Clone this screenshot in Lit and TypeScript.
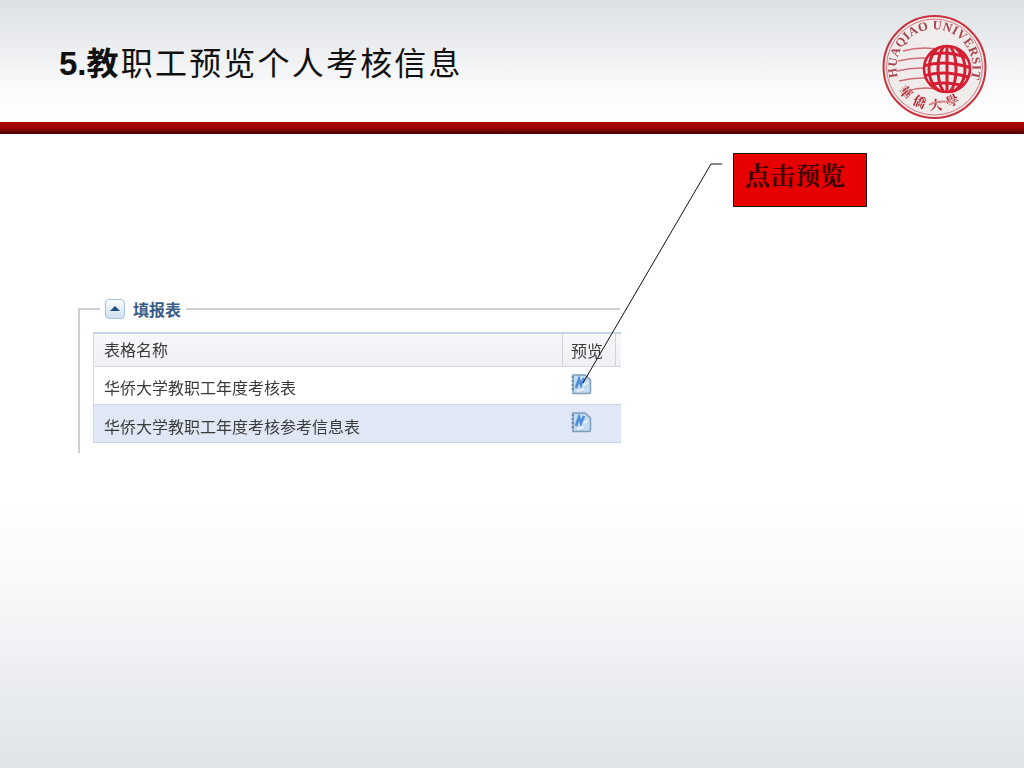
import { LitElement, html, css, svg } from "lit";
import { customElement } from "lit/decorators.js";

const docIcon = svg`
  <path d="M3 2 H15 L20.5 7 V19 Q20.5 20.5 19 20.5 H3 Z" fill="#c3daf3" stroke="#7f9cb8" stroke-width="1.5"/>
  <path d="M1.5 4 H4 M1.5 8 H4 M1.5 12 H4 M1.5 16 H4" stroke="#5f86ad" stroke-width="1.3"/>
  <path d="M6 15 L9 6 L11 12 L14 5" fill="none" stroke="#4f8fd8" stroke-width="2.6"/>
  <path d="M13 12 L18 10 M7 18 L14 16" fill="none" stroke="#f2f7fd" stroke-width="1.6"/>
`;

@customElement("app-root")
export class AppRoot extends LitElement {
  static styles = css`
    :host { display: block; width: 1024px; height: 768px; overflow: hidden; }
    .slide { position: relative; width: 1024px; height: 768px; display: flex; flex-direction: column;
      background: linear-gradient(180deg, #fff 0, #fff 500px, #f3f5f7 620px, #e0e4e8 768px); }
    .head { height: 122px; box-sizing: border-box; padding: 38px 0 0 59px;
      background: linear-gradient(180deg, #dde1e4 0, #eef0f2 55px, #fbfbfc 90px, #fff 122px); }
    .title { margin: 0; font: 400 32px/46px "Noto Sans CJK SC", "Liberation Sans", sans-serif; letter-spacing: 2.2px; color: #111; white-space: nowrap; }
    .title b { font-weight: 700; letter-spacing: 2.2px; }
    .title .num { font-family: "Liberation Sans", sans-serif; letter-spacing: 0; font-size: 33px; }
    .bar { height: 12px; background: linear-gradient(180deg, #ab0000 0, #a00000 45%, #4a0505 100%); }
    .logo { position: absolute; left: 879px; top: 15px; width: 110px; height: 108px; filter: blur(0.4px); }
    .logo text { font-family: "Liberation Serif", serif; }
    .wire { position: absolute; left: 0; top: 0; width: 1024px; height: 768px; pointer-events: none; }
    .callout { position: absolute; left: 733px; top: 153px; width: 134px; height: 54px; box-sizing: border-box;
      background: #e60000; border: 1px solid #1c0a0a; padding: 4px 0 0 11px;
      font: 700 25px/33px "Noto Serif CJK SC", "Noto Sans CJK SC", serif; color: #3a0000; white-space: nowrap; }
    .panel { position: absolute; left: 78px; top: 296px; width: 542px; height: 157px; font-family: "Noto Sans CJK SC", "Liberation Sans", sans-serif; filter: blur(0.35px); }
    .fieldset { position: absolute; left: 0; right: 0; top: 12px; bottom: 0;
      border-left: 2px solid #cfcfcf; border-top: 2px solid #cfcfcf; }
    .legend { position: absolute; left: 22px; top: 0; display: flex; align-items: center; gap: 8px;
      padding: 0 5px 0 5px; background: #fff; height: 25px; }
    .toggle { width: 20px; height: 20px; box-sizing: border-box; border: 1px solid #a9c2dc; border-radius: 4px;
      background: linear-gradient(180deg, #fafdff, #cfe0f1); display: flex; align-items: center; justify-content: center; }
    .toggle i { width: 0; height: 0; border-left: 5px solid transparent; border-right: 5px solid transparent;
      border-bottom: 5px solid #1d4f86; }
    .legend span { font-size: 16px; line-height: 24px; font-weight: 700; color: #3a5c86; }
    .table { position: absolute; left: 15px; top: 36px; width: 527px; font-size: 16px; color: #3a3a3a;
      border-top: 2px solid #c3d4e6; border-left: 1px solid #d2dce6; }
    .row { display: flex; align-items: center; height: 37px; }
    .row > .name { position: relative; top: 1px; }
    .row.head-row { height: 32px; background: linear-gradient(180deg, #f7f8fa, #eef0f3); border-bottom: 1px solid #d5d9dd; }
    .row.head-row > .name { top: -1px; }
    .row.alt { background: #dfe8f4; height: 39px; border-top: 1px dotted #b9c6d6; border-bottom: 1px dotted #b9c6d6; box-sizing: border-box; }
    .row.alt > .name { top: 2px; }
    .name { width: 468px; box-sizing: border-box; padding-left: 10px; white-space: nowrap; overflow: hidden; }
    .cell { width: 54px; height: 100%; box-sizing: border-box; display: flex; align-items: center; padding-left: 8px; white-space: nowrap; }
    .head-row .cell { border-left: 1px solid #d0d4d8; border-right: 1px solid #d0d4d8; }
    .cell svg { width: 22px; height: 22px; margin-top: -3px; }
  `;

  render() {
    return html`
      <div class="slide">
        <header class="head">
          <h1 class="title"><b><span class="num">5.</span>教</b>职工预览个人考核信息</h1>
        </header>
        <div class="bar"></div>

        <svg class="logo" viewBox="0 0 110 108">
          <defs>
            <path id="arc" d="M18.8 62 A38 38 0 1 1 92.2 62"></path>
            <path id="arc2" d="M17 72 A44 44 0 0 0 94 72"></path>
            <clipPath id="globe"><circle cx="68" cy="54" r="23"></circle></clipPath>
          </defs>
          <circle cx="55.5" cy="52" r="51" fill="#f1ecec" stroke="#c8323c" stroke-width="2"></circle>
          <circle cx="55.5" cy="52" r="48" fill="none" stroke="#d8747b" stroke-width="1"></circle>
          <text font-size="12.5" font-weight="700" fill="#a8434c">
            <textPath href="#arc" textLength="150">HUAQIAO UNIVERSITY</textPath>
          </text>
          <text font-size="13" font-weight="700" fill="#b02a35" style="font-family:'Noto Serif CJK SC','Noto Sans CJK SC',serif">
            <textPath href="#arc2" startOffset="4" textLength="70">華僑大學</textPath>
          </text>
          <path d="M24 36 Q46 30 68 36 M19 46 Q44 40 68 46 M18 56 Q42 50 68 56 M20 66 Q44 60 68 66 M28 76 Q46 70 68 76"
            fill="none" stroke="#cf6c74" stroke-width="1.3"></path>
          <path d="M50 90 Q60 84 76 88" fill="none" stroke="#d88" stroke-width="2"></path>
          <circle cx="68" cy="54" r="23" fill="#ece8e8"></circle>
          <g clip-path="url(#globe)" fill="none" stroke="#d41f33" stroke-width="3">
            <path d="M44 41 Q66 34 92 44"></path>
            <path d="M44 51 Q66 44 92 53"></path>
            <path d="M44 61 Q66 54 92 63"></path>
            <path d="M44 71 Q66 64 92 73"></path>
            <ellipse cx="68" cy="54" rx="9" ry="24"></ellipse>
            <ellipse cx="68" cy="54" rx="18" ry="24"></ellipse>
            <path d="M68 30 V78"></path>
          </g>
          <circle cx="68" cy="54" r="23" fill="none" stroke="#d41f33" stroke-width="2.6"></circle>
        </svg>

        <div class="panel">
          <div class="fieldset"></div>
          <div class="legend">
            <div class="toggle"><i></i></div>
            <span>填报表</span>
          </div>
          <div class="table">
            <div class="row head-row"><div class="name">表格名称</div><div class="cell">预览</div></div>
            <div class="row"><div class="name">华侨大学教职工年度考核表</div><div class="cell"><svg viewBox="0 0 22 22">${docIcon}</svg></div></div>
            <div class="row alt"><div class="name">华侨大学教职工年度考核参考信息表</div><div class="cell"><svg viewBox="0 0 22 22">${docIcon}</svg></div></div>
          </div>
        </div>

        <svg class="wire" viewBox="0 0 1024 768">
          <path d="M722 164 H711 L583 383" fill="none" stroke="#111" stroke-width="1"></path>
        </svg>

        <div class="callout">点击预览</div>
      </div>
    `;
  }
}
